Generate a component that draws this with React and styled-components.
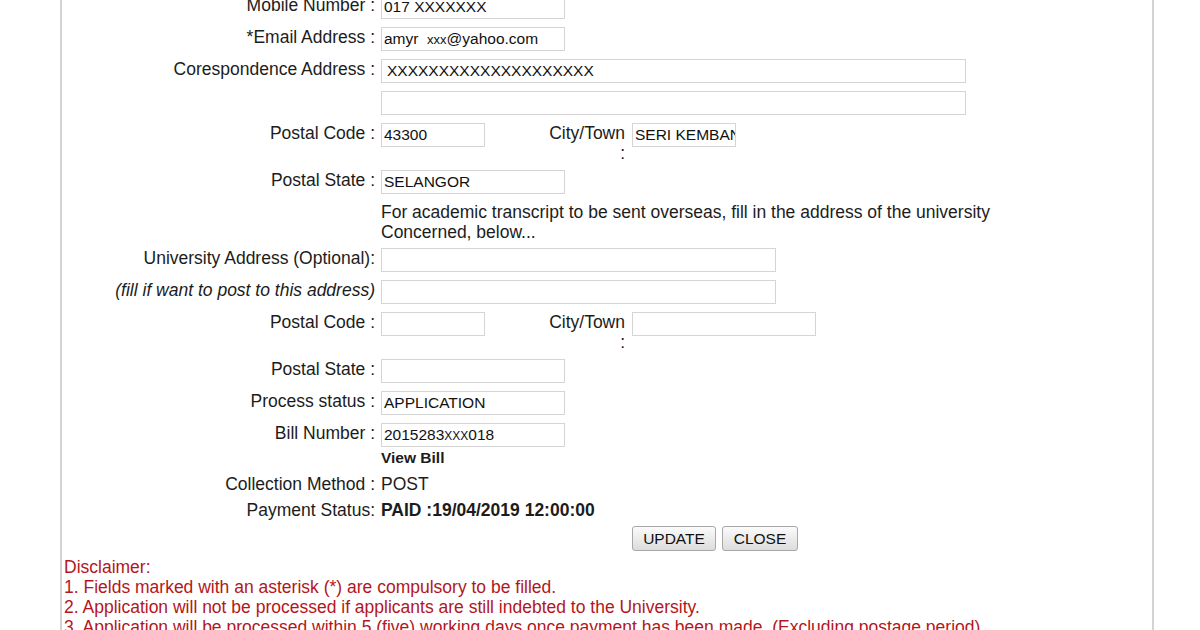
import React from "react";
import styled, { createGlobalStyle } from "styled-components";

const Global = createGlobalStyle`
  html, body { margin: 0; padding: 0; background: #ffffff; }
  body {
    font-family: "Liberation Sans", Arial, Helvetica, sans-serif;
    color: #1c1c1c;
    overflow: hidden;
  }
`;

const Page = styled.div`
  margin: -5px 0 0 60px;
  width: 1090px;
  height: 700px;
  border-left: 2px solid #d3d3d3;
  border-right: 2px solid #d3d3d3;
  background: #ffffff;
`;

const Row = styled.div`
  display: flex;
  align-items: flex-start;
  margin-bottom: ${(p) => p.$gap ?? 8}px;
`;

const Label = styled.div`
  width: 313px;
  flex-shrink: 0;
  text-align: right;
  font-size: 17.5px;
  line-height: 20px;
  padding-top: ${(p) => p.$pt ?? 0}px;
  padding-bottom: 1px;
  font-style: ${(p) => (p.$italic ? "italic" : "normal")};
  white-space: nowrap;
`;

const Value = styled.div`
  margin-left: 6px;
  display: flex;
  align-items: flex-start;
`;

const ValueStack = styled.div`
  margin-left: 6px;
  display: flex;
  flex-direction: column;
`;

const Field = styled.div`
  box-sizing: border-box;
  width: ${(p) => p.$w}px;
  height: 24px;
  border: 1px solid #d5d5d5;
  background: #fff;
  font-size: 15.5px;
  line-height: 22px;
  padding-left: ${(p) => p.$pl ?? 2}px;
  white-space: nowrap;
  overflow: hidden;
  color: #111;
`;

const Tiny = styled.span`
  font-size: ${(p) => p.$size ?? 12}px;
`;

const CityLabel = styled.div`
  width: 80px;
  margin-left: 60px;
  text-align: right;
  font-size: 17.5px;
  line-height: 20px;
`;

const CityField = styled(Field)`
  margin-left: 7px;
`;

const Note = styled.div`
  font-size: 17.5px;
  line-height: 20px;
`;

const PlainText = styled.div`
  font-size: 17.5px;
  line-height: 20px;
  padding-bottom: 1px;
  font-weight: ${(p) => (p.$bold ? "bold" : "normal")};
`;

const ViewBill = styled.div`
  font-size: 15.5px;
  font-weight: bold;
  line-height: 20px;
  margin-top: 1px;
`;

const Buttons = styled.div`
  display: flex;
  gap: 6px;
  margin-left: 570px;
  margin-bottom: 6px;
`;

const Button = styled.button`
  box-sizing: border-box;
  width: ${(p) => p.$w}px;
  height: 25px;
  border: 1px solid #a8a8a8;
  border-radius: 3px;
  background: linear-gradient(#fbfbfb, #dcdcdc);
  font-family: "Liberation Sans", Arial, sans-serif;
  font-size: 15.5px;
  color: #111;
  padding: 0;
`;

const Disclaimer = styled.div`
  color: #b3161c;
  font-size: 17.5px;
  line-height: 20px;
  padding-left: 2px;
  white-space: nowrap;
`;

export default function App() {
  return (
    <>
      <Global />
      <Page>
        <Row>
          <Label>Mobile Number :</Label>
          <Value><Field $w={184}>017 XXXXXXX</Field></Value>
        </Row>
        <Row>
          <Label>*Email Address :</Label>
          <Value>
            <Field $w={184}>amyr&nbsp; <Tiny $size={13}>xxx</Tiny>@yahoo.com</Field>
          </Value>
        </Row>
        <Row>
          <Label>Corespondence Address :</Label>
          <Value><Field $w={585} $pl={5}>XXXXXXXXXXXXXXXXXXXX</Field></Value>
        </Row>
        <Row>
          <Label></Label>
          <Value><Field $w={585}></Field></Value>
        </Row>
        <Row $gap={7}>
          <Label>Postal Code :</Label>
          <Value>
            <Field $w={104}>43300</Field>
            <CityLabel>City/Town :</CityLabel>
            <CityField $w={104}>SERI KEMBANGAN</CityField>
          </Value>
        </Row>
        <Row>
          <Label>Postal State :</Label>
          <Value><Field $w={184}>SELANGOR</Field></Value>
        </Row>
        <Row $gap={6}>
          <Label></Label>
          <Value>
            <Note>
              For academic transcript to be sent overseas, fill in the address of the university
              <br />
              Concerned, below...
            </Note>
          </Value>
        </Row>
        <Row>
          <Label>University Address (Optional):</Label>
          <Value><Field $w={395}></Field></Value>
        </Row>
        <Row>
          <Label $italic>(fill if want to post to this address)</Label>
          <Value><Field $w={395}></Field></Value>
        </Row>
        <Row $gap={7}>
          <Label>Postal Code :</Label>
          <Value>
            <Field $w={104}></Field>
            <CityLabel>City/Town :</CityLabel>
            <CityField $w={184}></CityField>
          </Value>
        </Row>
        <Row>
          <Label>Postal State :</Label>
          <Value><Field $w={184}></Field></Value>
        </Row>
        <Row>
          <Label>Process status :</Label>
          <Value><Field $w={184}>APPLICATION</Field></Value>
        </Row>
        <Row $gap={6}>
          <Label>Bill Number :</Label>
          <ValueStack>
            <Field $w={184}>2015283<Tiny $size={12}>XXX</Tiny>018</Field>
            <ViewBill>View Bill</ViewBill>
          </ValueStack>
        </Row>
        <Row $gap={5}>
          <Label>Collection Method :</Label>
          <Value><PlainText>POST</PlainText></Value>
        </Row>
        <Row $gap={5}>
          <Label>Payment Status:</Label>
          <Value><PlainText $bold>PAID :19/04/2019 12:00:00</PlainText></Value>
        </Row>
        <Buttons>
          <Button $w={84}>UPDATE</Button>
          <Button $w={76}>CLOSE</Button>
        </Buttons>
        <Disclaimer>
          Disclaimer:
          <br />
          1. Fields marked with an asterisk (*) are compulsory to be filled.
          <br />
          2. Application will not be processed if applicants are still indebted to the University.
          <br />
          3. Application will be processed within 5 (five) working days once payment has been made. (Excluding postage period)
        </Disclaimer>
      </Page>
    </>
  );
}
